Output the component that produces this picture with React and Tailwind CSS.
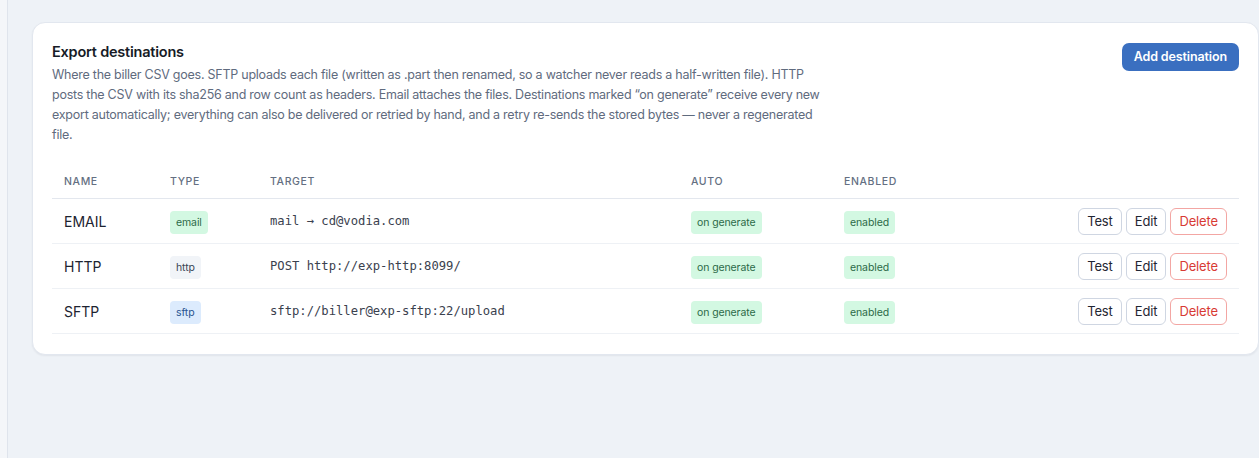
import React from "react"

const destinations = [
  { name: "EMAIL", type: "email", target: "mail → cd@vodia.com" },
  { name: "HTTP", type: "http", target: "POST http://exp-http:8099/" },
  { name: "SFTP", type: "sftp", target: "sftp://biller@exp-sftp:22/upload" },
]

const typeStyles = {
  email: "bg-[#d3f8e2] text-[#2c6a48]",
  http: "bg-[#f1f4f8] text-[#3b4656]",
  sftp: "bg-[#dcebfd] text-[#2a5592]",
}

const cols = "grid grid-cols-[106px_100px_421px_153px_1fr_auto] items-center"

function Badge({ className, children }) {
  return (
    <span className={`inline-flex h-[23px] items-center rounded-[4px] px-[6px] text-[10.5px] leading-none tracking-[-0.01em] ${className}`}>
      {children}
    </span>
  )
}

function RowButton({ danger, children }) {
  return (
    <button
      type="button"
      className={`h-[27px] rounded-md border bg-white px-[8px] text-[13px] leading-none tracking-[-0.01em] ${
        danger ? "border-[#f3a6a3] text-[#d83a34]" : "border-[#cfd6e2] text-[#1f2633]"
      }`}
    >
      {children}
    </button>
  )
}

export default function App() {
  return (
    <div className="flex min-h-[458px] bg-[#eef2f7] font-['Inter','Liberation_Sans',sans-serif]">
      <aside className="w-[8px] shrink-0 border-r border-[#dfe4ec] bg-[#f4f6f9]" />

      <main className="flex-1 pl-[24px] pt-[22px]">
        <section className="rounded-[13px] border border-[#e2e7ef] bg-white px-[19px] pb-[20px] pt-[19px] shadow-[0_1px_2px_rgba(15,23,42,0.06)]">
          <div className="flex items-start justify-between">
            <div>
              <h2 className="text-[14.5px] font-semibold leading-[20px] tracking-[-0.015em] text-[#161b26]">
                Export destinations
              </h2>
              <p className="mt-[3px] max-w-[776px] text-[12.5px] leading-[20px] tracking-[-0.02em] text-[#5f6b7e]">
                Where the biller CSV goes. SFTP uploads each file (written as .part then renamed, so a watcher never
                reads a half-written file). HTTP posts the CSV with its sha256 and row count as headers. Email attaches
                the files. Destinations marked “on generate” receive every new export automatically; everything can also
                be delivered or retried by hand, and a retry re-sends the stored bytes — never a regenerated file.
              </p>
            </div>
            <button
              type="button"
              className="mt-[1px] h-[28px] rounded-[7px] bg-[#3a6fc0] px-[12px] text-[12.5px] font-semibold leading-none tracking-[-0.01em] text-white"
            >
              Add destination
            </button>
          </div>

          <div className="mt-[17px]">
            <div className={`${cols} h-[37px] border-b border-[#e3e7ee] px-[12px] pt-[3px] text-[10.5px] font-medium uppercase tracking-[0.06em] text-[#646f82]`}>
              <span>Name</span>
              <span>Type</span>
              <span>Target</span>
              <span>Auto</span>
              <span>Enabled</span>
              <span />
            </div>
            {destinations.map((d) => (
              <div key={d.name} className={`${cols} h-[45px] border-b border-[#eef1f5] px-[12px]`}>
                <span className="text-[14px] text-[#1d2330]">{d.name}</span>
                <span>
                  <Badge className={typeStyles[d.type]}>{d.type}</Badge>
                </span>
                <span className="font-['DejaVu_Sans_Mono','Liberation_Mono',monospace] text-[12.2px] text-[#3a414e]">
                  {d.target}
                </span>
                <span>
                  <Badge className="bg-[#d3f8e2] text-[#2c6a48]">on generate</Badge>
                </span>
                <span>
                  <Badge className="bg-[#d3f8e2] text-[#2c6a48]">enabled</Badge>
                </span>
                <div className="flex gap-[4px]">
                  <RowButton>Test</RowButton>
                  <RowButton>Edit</RowButton>
                  <RowButton danger>Delete</RowButton>
                </div>
              </div>
            ))}
          </div>
        </section>
      </main>
    </div>
  )
}
